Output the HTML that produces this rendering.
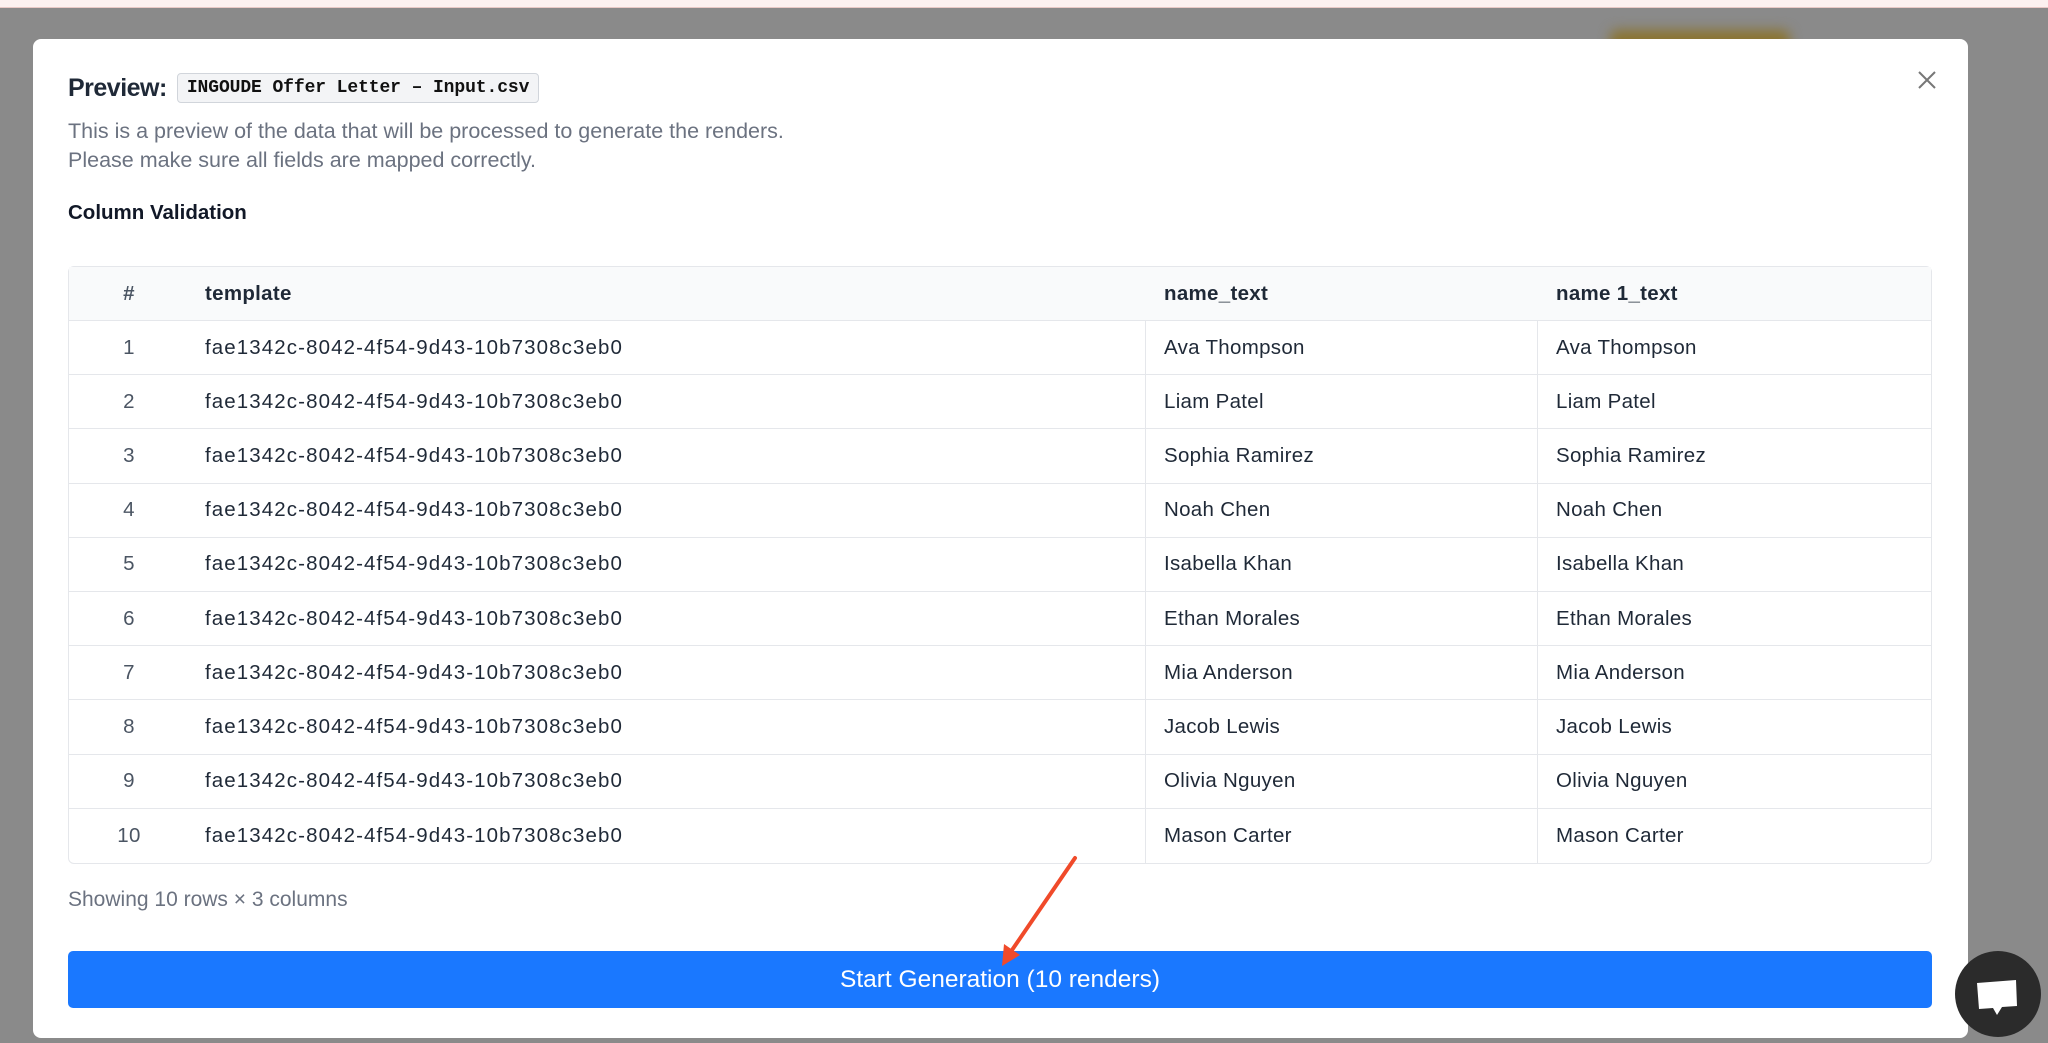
<!DOCTYPE html>
<html><head><meta charset="utf-8"><style>
*{margin:0;padding:0;box-sizing:border-box}
body{width:2048px;height:1043px;overflow:hidden;background:#8a8a8a;font-family:"Liberation Sans",sans-serif;position:relative}
.top{position:absolute;left:0;top:0;width:2048px;height:8px;background:#fcf1f0;border-bottom:1px solid #e9c9c6}
.blob{position:absolute;left:1610px;top:30px;width:180px;height:26px;background:#8a7430;filter:blur(6px);border-radius:8px}
.modal{position:absolute;left:33px;top:39px;width:1935px;height:999px;background:#fff;border-radius:8px}
.title{position:absolute;left:35px;top:34px;font-size:25px;color:#1f2937;font-weight:700;display:flex;align-items:center;letter-spacing:-0.5px}
.code{margin-left:10px;font-family:"Liberation Mono",monospace;font-weight:700;font-size:18px;letter-spacing:-0.1px;background:#f3f4f6;border:1px solid #d1d5db;border-radius:4px;padding:4px 9px;color:#111}
.desc{position:absolute;left:35px;top:78px;font-size:21.5px;color:#6b7280;line-height:29px}
.cv{position:absolute;left:35px;top:162px;font-size:20.5px;font-weight:700;color:#111827}
.close{position:absolute;left:1884px;top:31px}
table{position:absolute;left:35px;top:227px;width:1864px;border-collapse:separate;border-spacing:0;border:1px solid #e5e7eb;border-radius:6px;font-size:20.5px;color:#1f2937;letter-spacing:0.3px}
th{background:#f9fafb;font-weight:700;height:54px;text-align:left;border-bottom:1px solid #e5e7eb;color:#1f2937}
td{height:54.2px;border-bottom:1px solid #e5e7eb}
tr:last-child td{border-bottom:none}
.n{width:120px;text-align:center;color:#4b5563;padding-left:0}
.t{width:957px;padding-left:16px;border-right:1px solid #e5e7eb}
td.t{letter-spacing:1.1px}
th.t{border-right:none}
.a{width:392px;padding-left:18px;border-right:1px solid #e5e7eb}
th.a{border-right:none}
.b{padding-left:18px}
.show{position:absolute;left:35px;top:849px;font-size:21px;color:#6b7280}
.btn{position:absolute;left:35px;top:912px;width:1864px;height:57px;background:#1a78ff;border-radius:5px;color:#fff;font-size:24.5px;display:flex;align-items:center;justify-content:center}
.chat{position:absolute;left:1955px;top:951px;width:86px;height:86px;border-radius:50%;background:#2b2b2b}
</style></head><body>
<div class="top"></div>
<div class="blob"></div>
<div class="modal">
<div class="title">Preview:<span class="code">INGOUDE Offer Letter – Input.csv</span></div>
<div class="desc">This is a preview of the data that will be processed to generate the renders.<br>Please make sure all fields are mapped correctly.</div>
<div class="cv">Column Validation</div>
<svg class="close" width="20" height="20" viewBox="0 0 20 20"><path d="M2 2L18 18M18 2L2 18" stroke="#777" stroke-width="2"/></svg>
<table>
<tr><th class="n">#</th><th class="t">template</th><th class="a">name_text</th><th class="b">name 1_text</th></tr>
<tr><td class="n">1</td><td class="t">fae1342c-8042-4f54-9d43-10b7308c3eb0</td><td class="a">Ava Thompson</td><td class="b">Ava Thompson</td></tr>
<tr><td class="n">2</td><td class="t">fae1342c-8042-4f54-9d43-10b7308c3eb0</td><td class="a">Liam Patel</td><td class="b">Liam Patel</td></tr>
<tr><td class="n">3</td><td class="t">fae1342c-8042-4f54-9d43-10b7308c3eb0</td><td class="a">Sophia Ramirez</td><td class="b">Sophia Ramirez</td></tr>
<tr><td class="n">4</td><td class="t">fae1342c-8042-4f54-9d43-10b7308c3eb0</td><td class="a">Noah Chen</td><td class="b">Noah Chen</td></tr>
<tr><td class="n">5</td><td class="t">fae1342c-8042-4f54-9d43-10b7308c3eb0</td><td class="a">Isabella Khan</td><td class="b">Isabella Khan</td></tr>
<tr><td class="n">6</td><td class="t">fae1342c-8042-4f54-9d43-10b7308c3eb0</td><td class="a">Ethan Morales</td><td class="b">Ethan Morales</td></tr>
<tr><td class="n">7</td><td class="t">fae1342c-8042-4f54-9d43-10b7308c3eb0</td><td class="a">Mia Anderson</td><td class="b">Mia Anderson</td></tr>
<tr><td class="n">8</td><td class="t">fae1342c-8042-4f54-9d43-10b7308c3eb0</td><td class="a">Jacob Lewis</td><td class="b">Jacob Lewis</td></tr>
<tr><td class="n">9</td><td class="t">fae1342c-8042-4f54-9d43-10b7308c3eb0</td><td class="a">Olivia Nguyen</td><td class="b">Olivia Nguyen</td></tr>
<tr><td class="n">10</td><td class="t">fae1342c-8042-4f54-9d43-10b7308c3eb0</td><td class="a">Mason Carter</td><td class="b">Mason Carter</td></tr>
</table>
<div class="show">Showing 10 rows × 3 columns</div>
<div class="btn">Start Generation (10 renders)</div>
</div>
<svg style="position:absolute;left:0;top:0" width="2048" height="1043">
<path d="M1075 858L1010 953" stroke="#f04a2a" stroke-width="4" stroke-linecap="round"/>
<path d="M1002 966L1004 944L1020 955Z" fill="#f04a2a"/>
</svg>
<div class="chat"><svg width="86" height="86" viewBox="0 0 86 86"><path d="M22 32L61 29L62 55L47 56L42 64L38 57L24 58Z" fill="#fff"/></svg></div>
</body></html>
